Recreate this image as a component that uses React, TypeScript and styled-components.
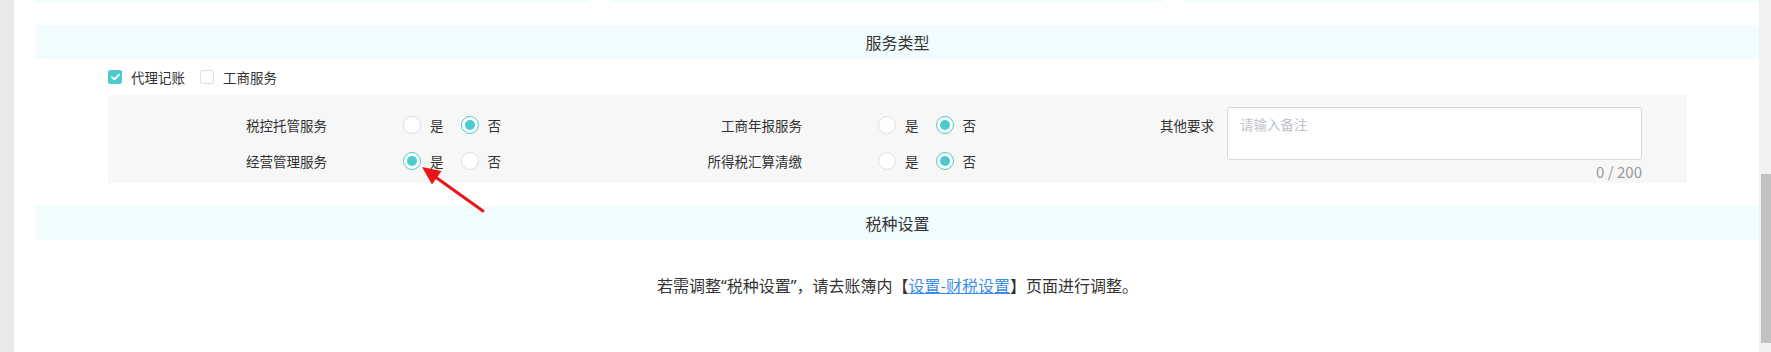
import styled, { createGlobalStyle } from 'styled-components';

const TEAL = '#4ccbcd';

const GlobalStyle = createGlobalStyle`
  html, body {
    margin: 0;
    padding: 0;
    background: #fff;
  }
  body {
    font-family: "Noto Sans CJK SC", "Noto Sans", sans-serif;
    color: #333;
  }
`;

const Page = styled.div`
  position: relative;
  display: flex;
  width: 1771px;
  height: 352px;
  overflow: hidden;
  background: #fff;
`;

const SideEdge = styled.div`
  width: 14px;
  flex: none;
  background: #e9e9e9;
`;

const Main = styled.div`
  flex: 1;
  padding-left: 22px;
  min-width: 0;
`;

const CardTails = styled.div`
  display: grid;
  grid-template-columns: 552px 552px 573px;
  justify-content: space-between;
  height: 2px;
  margin-bottom: 23px;
`;

const CardTail = styled.div`
  background: #f0fcfd;
`;

const SectionHeader = styled.div<{ $top?: number }>`
  height: 34px;
  line-height: 34px;
  margin-top: ${(p) => p.$top ?? 0}px;
  background: #f0fcfd;
  text-align: center;
  font-size: 16px;
  color: #333;
`;

const CheckRow = styled.div`
  display: flex;
  align-items: center;
  height: 36px;
  padding-left: 72px;
`;

const CheckItem = styled.label`
  display: flex;
  align-items: center;
  margin-right: 15px;
  font-size: 13.5px;
  color: #333;
`;

const CheckBox = styled.span<{ $checked?: boolean }>`
  display: inline-flex;
  align-items: center;
  justify-content: center;
  width: 14px;
  height: 14px;
  box-sizing: border-box;
  border-radius: 2px;
  border: 1px solid ${(p) => (p.$checked ? TEAL : '#dcdfe6')};
  background: ${(p) => (p.$checked ? TEAL : '#fff')};
  margin-right: 9px;
`;

const Panel = styled.div`
  display: grid;
  grid-template-columns: 475px 475px 1fr;
  grid-template-rows: 36px 36px;
  grid-auto-flow: column;
  margin: 0 72px;
  padding: 12px 45px 4px 0;
  background: #f7f7f7;
`;

const FormItem = styled.div<{ $span?: number }>`
  display: flex;
  align-items: flex-start;
  grid-row: span ${(p) => p.$span ?? 1};
`;

const Label = styled.div<{ $width: number; $gap: number }>`
  width: ${(p) => p.$width}px;
  margin-right: ${(p) => p.$gap}px;
  flex: none;
  text-align: right;
  line-height: 36px;
  font-size: 13.5px;
  color: #333;
  white-space: nowrap;
`;

const RadioGroup = styled.div`
  display: flex;
  align-items: center;
  height: 36px;
`;

const RadioOption = styled.label`
  display: flex;
  align-items: center;
  margin-right: 17px;
  font-size: 13.5px;
  color: #333;
`;

const RadioCircle = styled.span<{ $checked?: boolean }>`
  position: relative;
  width: 18px;
  height: 18px;
  box-sizing: border-box;
  border-radius: 50%;
  border: 1px solid ${(p) => (p.$checked ? TEAL : '#dcdfe6')};
  background: #fff;
  margin-right: 9px;

  &::after {
    content: '';
    display: ${(p) => (p.$checked ? 'block' : 'none')};
    position: absolute;
    left: 3px;
    top: 3px;
    width: 10px;
    height: 10px;
    border-radius: 50%;
    background: ${TEAL};
  }
`;

const RemarkBox = styled.div`
  display: flex;
  flex-direction: column;
  width: 415px;
`;

const TextArea = styled.textarea`
  width: 415px;
  height: 53px;
  box-sizing: border-box;
  margin: 0;
  padding: 6px 12px;
  border: 1px solid #d9d9d9;
  border-radius: 3px;
  background: #fff;
  resize: none;
  outline: none;
  font-family: inherit;
  font-size: 13.5px;
  line-height: 20px;
  color: #333;

  &::placeholder {
    color: #c0c4cc;
  }
`;

const Counter = styled.div`
  margin-top: 2px;
  text-align: right;
  line-height: 20px;
  font-size: 15px;
  color: #999;
`;

const Note = styled.div`
  padding-top: 34px;
  text-align: center;
  line-height: 22px;
  font-size: 16px;
  color: #333;
`;

const Quote = styled.span`
  font-family: "Noto Sans", sans-serif;
`;

const LinkText = styled.a`
  color: #3a8ee6;
  text-decoration: underline;
  cursor: pointer;
`;

const Scrollbar = styled.div`
  width: 12px;
  flex: none;
  display: flex;
  flex-direction: column;
  align-items: flex-end;
  background: #f1f1f1;
`;

const Thumb = styled.div`
  width: 10px;
  height: 169px;
  margin-top: 174px;
  background: #c1c1c1;
`;

const Annotation = styled.svg`
  position: absolute;
  left: 415px;
  top: 160px;
  width: 75px;
  height: 56px;
  pointer-events: none;
`;

const CheckMark = () => (
  <svg width="9" height="8" viewBox="0 0 9 8">
    <path d="M1 4.2 L3.5 6.4 L8 1.6" fill="none" stroke="#fff" strokeWidth="1.8" strokeLinecap="round" strokeLinejoin="round" />
  </svg>
);

type Choice = 'yes' | 'no';

const RadioItem = ({ label, value, labelWidth }: { label: string; value: Choice; labelWidth: number }) => (
  <FormItem>
    <Label $width={labelWidth} $gap={76}>{label}</Label>
    <RadioGroup>
      <RadioOption>
        <RadioCircle $checked={value === 'yes'} />是
      </RadioOption>
      <RadioOption>
        <RadioCircle $checked={value === 'no'} />否
      </RadioOption>
    </RadioGroup>
  </FormItem>
);

const services: { label: string; value: Choice }[] = [
  { label: '税控托管服务', value: 'no' },
  { label: '经营管理服务', value: 'yes' },
  { label: '工商年报服务', value: 'no' },
  { label: '所得税汇算清缴', value: 'no' },
];

export default function App() {
  return (
    <>
      <GlobalStyle />
      <Page>
        <SideEdge />
        <Main>
          <CardTails>
            <CardTail />
            <CardTail />
            <CardTail />
          </CardTails>

          <SectionHeader>服务类型</SectionHeader>

          <CheckRow>
            <CheckItem>
              <CheckBox $checked>
                <CheckMark />
              </CheckBox>
              代理记账
            </CheckItem>
            <CheckItem>
              <CheckBox />
              工商服务
            </CheckItem>
          </CheckRow>

          <Panel>
            {services.map((s) => (
              <RadioItem key={s.label} label={s.label} value={s.value} labelWidth={219} />
            ))}
            <FormItem $span={2}>
              <Label $width={156} $gap={13}>其他要求</Label>
              <RemarkBox>
                <TextArea placeholder="请输入备注" maxLength={200} />
                <Counter>0 / 200</Counter>
              </RemarkBox>
            </FormItem>
          </Panel>

          <SectionHeader $top={23}>税种设置</SectionHeader>

          <Note>
            若需调整<Quote>“</Quote>税种设置<Quote>”</Quote>，请去账簿内【<LinkText>设置-财税设置</LinkText>】页面进行调整。
          </Note>
        </Main>
        <Scrollbar>
          <Thumb />
        </Scrollbar>

        <Annotation viewBox="415 160 75 56">
          <line x1="483" y1="211" x2="434" y2="176" stroke="#e8161b" strokeWidth="3" strokeLinecap="round" />
          <polygon points="422,167 441.5,171 432,184.5" fill="#e8161b" />
        </Annotation>
      </Page>
    </>
  );
}
